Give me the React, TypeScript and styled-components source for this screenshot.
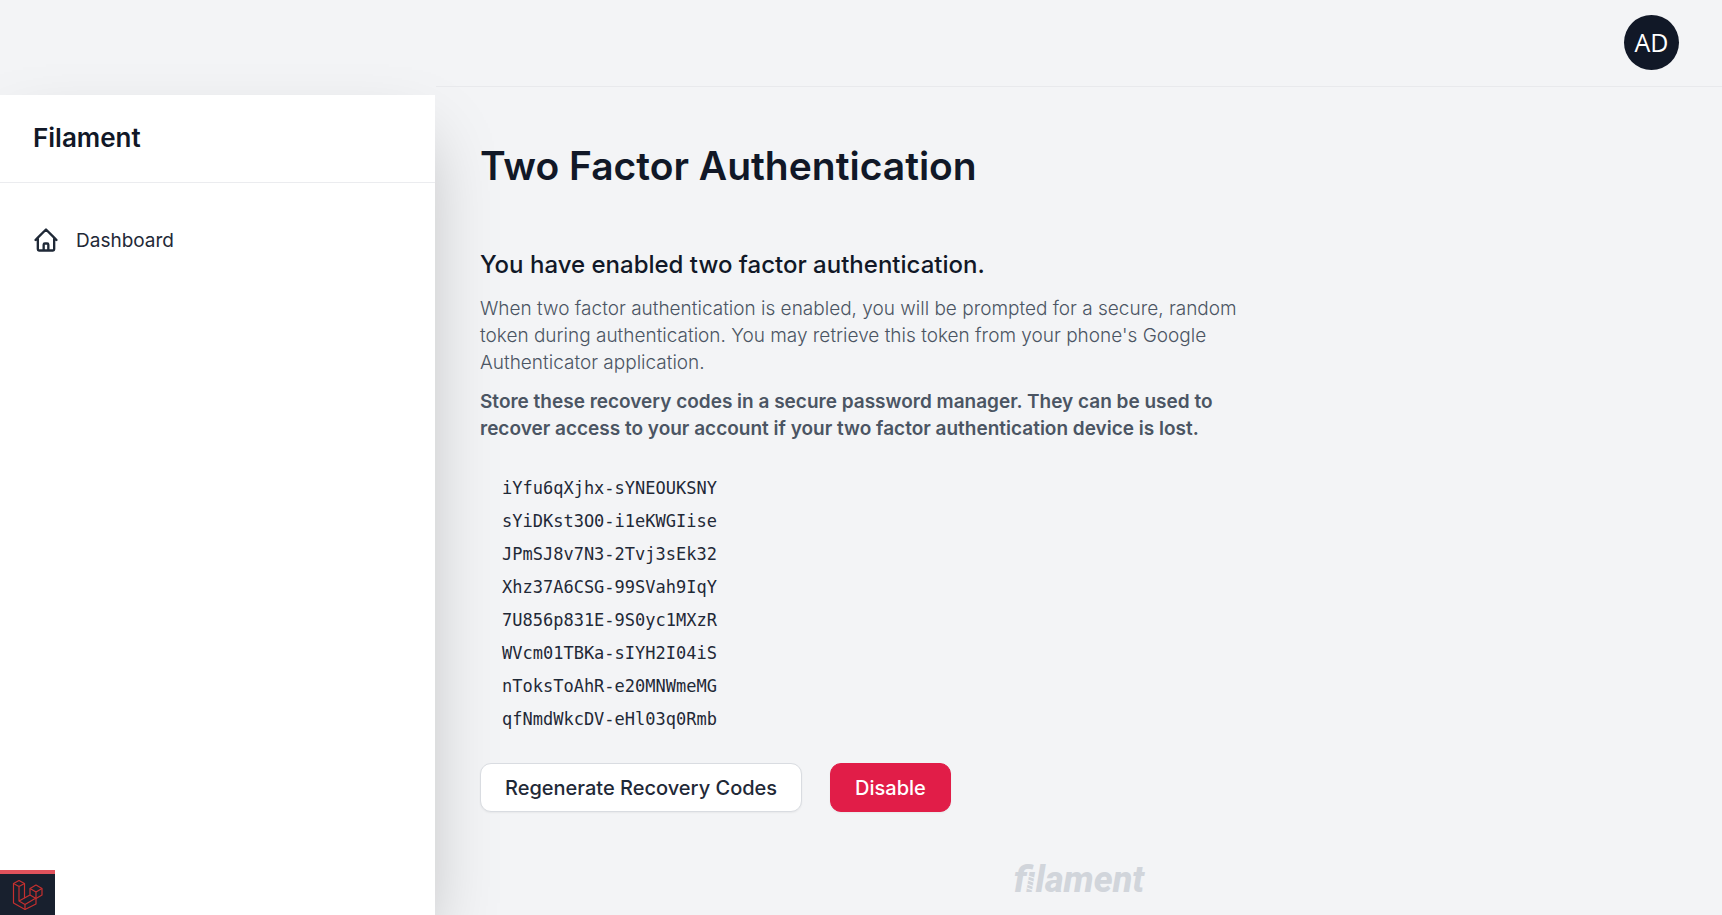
import React from "react";
import styled, { createGlobalStyle } from "styled-components";

const Global = createGlobalStyle`
  *, *::before, *::after { box-sizing: border-box; }
  body { margin: 0; background: #f3f4f6; color: #111827; font-family: Inter, "Liberation Sans", sans-serif; }
  h1, h2, p, ul { margin: 0; padding: 0; }
  ul { list-style: none; }
`;

const Shell = styled.div`
  min-height: 100vh;
  display: grid;
  grid-template-columns: 436px 1fr;
`;

const Sidebar = styled.aside`
  margin-top: 95px;
  margin-right: 1px;
  display: flex;
  flex-direction: column;
  background: #fff;
  box-shadow: 0 34px 68px -12px rgba(0, 0, 0, 0.25);
`;

const Brand = styled.a`
  display: flex;
  align-items: center;
  height: 88px;
  padding: 0 33px 2px;
  border-bottom: 1px solid #ebecef;
  color: #111827;
  font-size: 26px;
  font-weight: 600;
  text-decoration: none;
`;

const Nav = styled.nav`
  flex: 1;
  padding: 32px 16px;
`;

const NavLink = styled.a`
  display: flex;
  align-items: center;
  gap: 16px;
  height: 50px;
  padding: 0 16px;
  color: #1f2937;
  font-size: 19px;
  text-decoration: none;
`;

const DebugBar = styled.button`
  align-self: flex-start;
  display: flex;
  align-items: center;
  justify-content: center;
  width: 55px;
  height: 45px;
  padding: 0;
  border: 0;
  border-top: 4px solid #e0525c;
  background: #18202e;
`;

const Page = styled.div`
  display: flex;
  flex-direction: column;
`;

const Topbar = styled.header`
  display: flex;
  align-items: center;
  justify-content: flex-end;
  height: 87px;
  padding: 0 43px 1px;
  border-bottom: 1px solid #e8e9ec;
`;

const Avatar = styled.button`
  width: 55px;
  height: 55px;
  padding: 0 0 2px;
  border: 0;
  border-radius: 50%;
  background: #111827;
  color: #fff;
  font: 400 25px "Open Sans", sans-serif;
`;

const Content = styled.main`
  flex: 1;
  padding: 52px 44px 0;
`;

const Title = styled.h1`
  font-size: 39px;
  line-height: 54px;
  font-weight: 600;
`;

const Section = styled.section`
  max-width: 784px;
  padding-top: 54px;
`;

const Heading = styled.h2`
  font-size: 24px;
  line-height: 36px;
  font-weight: 500;
`;

const Text = styled.p<{ $strong?: boolean }>`
  margin-top: 12px;
  color: #4b5563;
  font-size: 19px;
  line-height: 27px;
  font-weight: ${(p) => (p.$strong ? 600 : 300)};
`;

const Codes = styled.ul`
  padding: 30px 22px 0;
  color: #1f2937;
  font-family: "DejaVu Sans Mono", monospace;
  font-size: 17px;
  line-height: 33px;
`;

const Actions = styled.div`
  display: flex;
  gap: 28px;
  padding-top: 27px;
`;

const Button = styled.button<{ $danger?: boolean }>`
  height: 49px;
  padding: 0 24px;
  border: 1px solid ${(p) => (p.$danger ? "#e11d48" : "#d9dce1")};
  border-radius: 11px;
  background: ${(p) => (p.$danger ? "#e11d48" : "#fff")};
  color: ${(p) => (p.$danger ? "#fff" : "#1f2937")};
  box-shadow: 0 1px 2px rgba(0, 0, 0, 0.05);
  font: 500 20px Inter, sans-serif;
`;

const Footer = styled.footer`
  display: flex;
  justify-content: center;
  padding-bottom: 14px;
`;

const Wordmark = styled.a`
  position: relative;
  color: #d1d5db;
  font: italic 800 36px/42px Roboto, sans-serif;
  text-decoration: none;
`;

/* Filament coil: cuts thin gaps through the stem of the "i" */
const Coil = styled.svg`
  position: absolute;
  left: 12px;
  top: 14px;
`;

const codes = [
  "iYfu6qXjhx-sYNEOUKSNY",
  "sYiDKst3O0-i1eKWGIise",
  "JPmSJ8v7N3-2Tvj3sEk32",
  "Xhz37A6CSG-99SVah9IqY",
  "7U856p831E-9S0yc1MXzR",
  "WVcm01TBKa-sIYH2I04iS",
  "nToksToAhR-e20MNWmeMG",
  "qfNmdWkcDV-eHl03q0Rmb",
];

const HomeIcon = () => (
  <svg width="28" height="28" viewBox="0 0 24 24" fill="none" stroke="currentColor" strokeWidth="2" strokeLinecap="round" strokeLinejoin="round" aria-hidden="true">
    <path d="M3 12l2-2m0 0l7-7 7 7M5 10v10a1 1 0 001 1h3m10-11l2 2m-2-2v10a1 1 0 01-1 1h-3m-6 0a1 1 0 001-1v-4a1 1 0 011-1h2a1 1 0 011 1v4a1 1 0 001 1m-6 0h6" />
  </svg>
);

const LaravelIcon = () => (
  <svg width="32" height="32" viewBox="0 0 32 32" fill="none" stroke="#c5302f" strokeWidth="1.2" strokeLinejoin="round" aria-hidden="true">
    <path d="M1.500 4.500L7 1.500l5.500 3v14.500l5.500-3v-6.500l6-3.500 6 3.500v6.500l-6 3.500v5.500L13 30.500 1.500 24z" />
    <path d="M1.500 4.500L7 7.500l5.500-3M7 7.500V22l5.500-3M7 22l6 3.500v5M13 25.500l11-6.500M18 9.500l6 3.500 6-3.500M24 13v6.500M18 16l6 3.500" />
  </svg>
);

export default function App() {
  return (
    <>
      <Global />
      <Shell>
        <Sidebar>
          <Brand href="#">Filament</Brand>
          <Nav>
            <NavLink href="#"><HomeIcon />Dashboard</NavLink>
          </Nav>
          <DebugBar type="button" aria-label="Open debug bar"><LaravelIcon /></DebugBar>
        </Sidebar>
        <Page>
          <Topbar><Avatar type="button">AD</Avatar></Topbar>
          <Content>
            <Title>Two Factor Authentication</Title>
            <Section>
              <Heading>You have enabled two factor authentication.</Heading>
              <Text>When two factor authentication is enabled, you will be prompted for a secure, random token during authentication. You may retrieve this token from your phone's Google Authenticator application.</Text>
              <Text $strong>Store these recovery codes in a secure password manager. They can be used to recover access to your account if your two factor authentication device is lost.</Text>
              <Codes>{codes.map((c) => <li key={c}>{c}</li>)}</Codes>
              <Actions>
                <Button type="button">Regenerate Recovery Codes</Button>
                <Button type="button" $danger>Disable</Button>
              </Actions>
            </Section>
          </Content>
          <Footer>
            <Wordmark href="#">
              filament
              <Coil width="12" height="20" viewBox="0 0 12 20" fill="none" stroke="#f3f4f6" strokeWidth="1.3" aria-hidden="true">
                <path d="M2 3l9 3M2 7l8 3M1 11l8 3M1 15l8 3" />
              </Coil>
            </Wordmark>
          </Footer>
        </Page>
      </Shell>
    </>
  );
}
